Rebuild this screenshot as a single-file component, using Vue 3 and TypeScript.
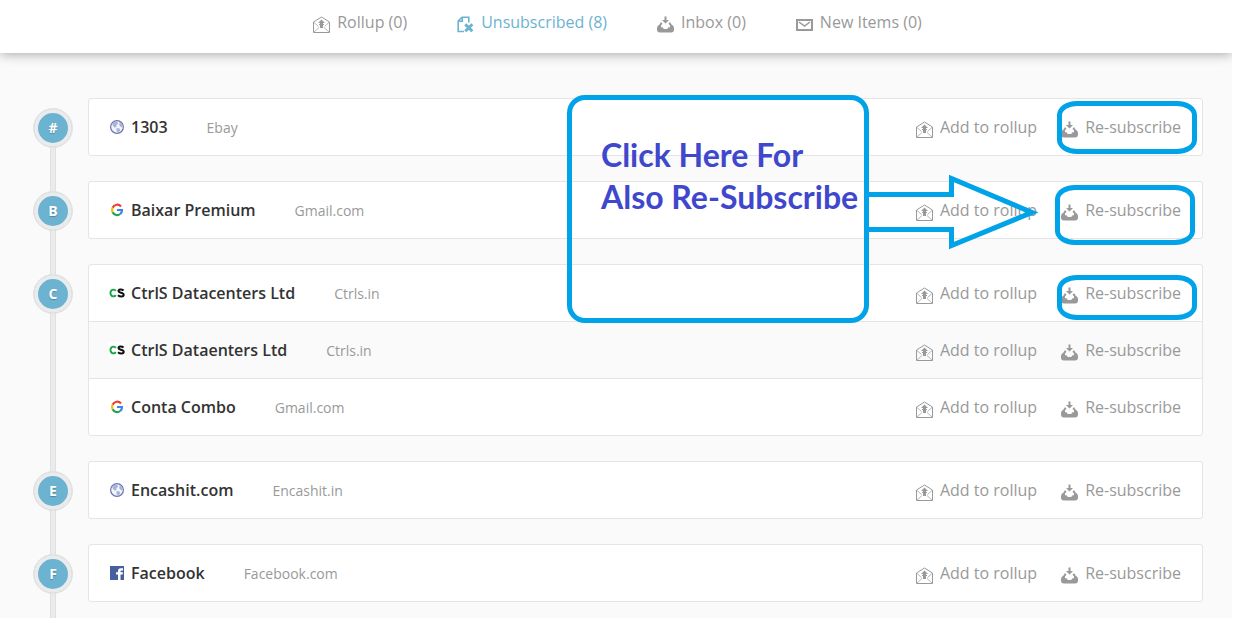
<script setup lang="ts">
interface Sender {
  name: string
  domain: string
  logo: 'globe' | 'google' | 'ctrls' | 'facebook'
}
interface Group {
  letter: string
  senders: Sender[]
}
interface Tab {
  label: string
  icon: 'rollup' | 'unsubscribed' | 'inbox' | 'new'
  active: boolean
}

const tabs: Tab[] = [
  { label: 'Rollup (0)', icon: 'rollup', active: false },
  { label: 'Unsubscribed (8)', icon: 'unsubscribed', active: true },
  { label: 'Inbox (0)', icon: 'inbox', active: false },
  { label: 'New Items (0)', icon: 'new', active: false },
]

const groups: Group[] = [
  { letter: '#', senders: [{ name: '1303', domain: 'Ebay', logo: 'globe' }] },
  { letter: 'B', senders: [{ name: 'Baixar Premium', domain: 'Gmail.com', logo: 'google' }] },
  {
    letter: 'C',
    senders: [
      { name: 'CtrlS Datacenters Ltd', domain: 'Ctrls.in', logo: 'ctrls' },
      { name: 'CtrlS Dataenters Ltd', domain: 'Ctrls.in', logo: 'ctrls' },
      { name: 'Conta Combo', domain: 'Gmail.com', logo: 'google' },
    ],
  },
  { letter: 'E', senders: [{ name: 'Encashit.com', domain: 'Encashit.in', logo: 'globe' }] },
  { letter: 'F', senders: [{ name: 'Facebook', domain: 'Facebook.com', logo: 'facebook' }] },
]
</script>

<template>
  <svg class="defs" aria-hidden="true">
    <symbol id="i-rollup" viewBox="0 0 17 17">
      <path d="M.5 6 8.500 1l8 5v10.500H.5z" fill="none" stroke="currentColor" stroke-width="1" />
      <path d="M1 6.500 5.500 10.500 M16 6.500 11.500 10.500 M1 16l5-4.500 M16 16l-5-4.500" fill="none" stroke="currentColor" stroke-width=".7" />
      <path d="M8.500 3.500 12 7H10v1h1v1h-1v3H7V9H6V8h1V7H5z" fill="currentColor" />
    </symbol>
    <symbol id="i-unsubscribed" viewBox="0 0 17 17">
      <path d="M7 15.500H1.200V5L5 1.200h6.800v5.300 M5.300 1.200v4.100H1.200" fill="none" stroke="currentColor" stroke-width="1.600" />
      <path d="m8.300 8.300 7 7 M15.300 8.300l-7 7" fill="none" stroke="currentColor" stroke-width="3" />
    </symbol>
    <symbol id="i-inbox" viewBox="0 0 17 17">
      <path d="M7.500.5h2V4H12L8.500 7.500 5 4h2.500z" fill="currentColor" />
      <path d="M4 6 5.500 7.800 4 9.500v1.700h1.500L6.800 13h3.400l1.300-1.800H13V9.500l-1.500-1.700L13 6l1.500 2.500Q17 9.500 17 12v1.500Q17 16.500 14 16.500H3Q0 16.500 0 13.500V12q0-2.500 2.500-3.500z" fill="currentColor" />
    </symbol>
    <symbol id="i-new" viewBox="0 0 17 17">
      <path d="M1 4h15v10H1z" fill="none" stroke="currentColor" stroke-width="2" />
      <path d="m3 6 5.500 4L14 6" fill="none" stroke="currentColor" stroke-width="1.500" />
    </symbol>
    <symbol id="l-globe" viewBox="0 0 16 16">
      <circle cx="8" cy="8" r="6.400" fill="#f2f4fb" stroke="#6a74ae" stroke-width="1.200" />
      <path d="M3 4.500 5.500 2.500 8.500 3 9 5 7.200 6.200 7.500 8 5.500 8.500 4 7z M7.500 9l3 .5.8 1.500-1.800 2.500-1.800-1z M10.500 3l2.500 2 .8 3-1.800.3-1.700-2z" fill="#a9b3d8" />
    </symbol>
    <symbol id="l-google" viewBox="0 0 16 16">
      <g fill="none" stroke-width="2.200">
        <path d="M12 4.500A5 5 0 0 0 3.600 5.700" stroke="#e8402f" />
        <path d="M3.600 5.700a5 5 0 0 0 0 4.600" stroke="#fbbc05" />
        <path d="M3.600 10.300a5 5 0 0 0 7.600 1.700" stroke="#23a455" />
        <path d="M11.200 12A5 5 0 0 0 13 8H8" stroke="#3d82f0" />
      </g>
    </symbol>
    <symbol id="l-ctrls" viewBox="0 0 16 16">
      <path d="M0 0h16v16H0z" fill="#fff" />
      <path d="M6.800 5.900a3 3.400 0 1 0 0 4.200" fill="none" stroke="#12a840" stroke-width="1.900" />
      <path d="M14.600 5.600C12.500 3.800 9.300 4.300 9.500 6.200c.2 2 5.200 1.200 5.200 3.600 0 2.200-3.700 2.300-5.700.5" fill="none" stroke="#111" stroke-width="2" />
    </symbol>
    <symbol id="l-facebook" viewBox="0 0 16 16">
      <path d="M1 1h14v14H1z" fill="#4460a0" />
      <path d="M9 15V9.500H7V7.300h2V6q0-2.800 2.700-2.800H14v2.200h-1.500q-1 0-1 1v.9H14l-.4 2.200h-2.100V15z" fill="#fff" />
    </symbol>
  </svg>

  <div class="page">
    <nav class="tabs">
      <a v-for="tab in tabs" :key="tab.icon" href="#" class="link" :class="{ active: tab.active }">
        <svg class="icon"><use :href="`#i-${tab.icon}`" /></svg>
        <span>{{ tab.label }}</span>
      </a>
    </nav>

    <main class="timeline">
      <section v-for="group in groups" :key="group.letter" class="group">
        <div class="rail"><span class="badge">{{ group.letter }}</span></div>
        <ul class="card">
          <li v-for="sender in group.senders" :key="sender.name" class="row">
            <svg class="logo"><use :href="`#l-${sender.logo}`" /></svg>
            <span class="name">{{ sender.name }}</span>
            <span class="domain">{{ sender.domain }}</span>
            <div class="actions">
              <button type="button" class="link">
                <svg class="icon"><use href="#i-rollup" /></svg>
                <span>Add to rollup</span>
              </button>
              <button type="button" class="link">
                <svg class="icon"><use href="#i-inbox" /></svg>
                <span>Re-subscribe</span>
              </button>
            </div>
          </li>
        </ul>
      </section>
    </main>

    <div class="notes">
      <p class="callout">Click Here For<br />Also Re-Subscribe</p>
      <svg class="arrow" viewBox="0 0 172 76">
        <path d="M0 20.500H83.500V4.500L164 38.500 83.500 71.500V55.500H0" fill="none" stroke="#00a2e8" stroke-width="5" />
      </svg>
      <div class="ring first"></div>
      <div class="ring second"></div>
      <div class="ring third"></div>
    </div>
  </div>
</template>

<style>
body {
  margin: 0;
  background: #fff;
}
</style>

<style scoped>
.defs {
  position: absolute;
  width: 0;
  height: 0;
}
.page {
  position: relative;
  overflow: hidden;
  margin-right: 5px;
  background: #fafafa;
  font-family: "Open Sans", sans-serif;
  font-size: 16px;
  line-height: 22px;
  color: #999;
}
.tabs {
  position: relative;
  display: flex;
  justify-content: center;
  align-items: flex-start;
  gap: 50px;
  height: 42px;
  padding: 11px 0 0 3px;
  background: #fff;
  box-shadow: 0 0 12px rgba(0, 0, 0, 0.4);
}
.link {
  display: flex;
  align-items: center;
  gap: 7px;
  padding: 0;
  border: 0;
  background: none;
  font: inherit;
  color: #999;
  text-decoration: none;
  white-space: nowrap;
  cursor: pointer;
}
.link.active {
  color: #6cb3d1;
}
.icon {
  width: 17px;
  height: 17px;
  margin-top: 5px;
}
.timeline {
  padding: 45px 29px 0 33px;
}
.group {
  display: flex;
  gap: 15px;
}
.rail {
  position: relative;
  flex: none;
  width: 40px;
  padding-top: 10px;
}
.rail::before {
  content: "";
  position: absolute;
  top: 0;
  bottom: 0;
  left: 17px;
  width: 4px;
  border: solid #e0e0e0;
  border-width: 0 1px;
  background: #ebebeb;
}
.group:first-child .rail::before {
  top: 20px;
}
.badge {
  position: relative;
  display: block;
  box-sizing: border-box;
  width: 40px;
  height: 40px;
  border: 1px solid #e2e2e2;
  border-radius: 50%;
  background: #6cb3d1;
  background-clip: padding-box;
  box-shadow: inset 0 0 0 4px #ebebeb;
  font-size: 14px;
  font-weight: 700;
  line-height: 38px;
  text-align: center;
  color: #fff;
  text-shadow: 0 1px 1px rgba(0, 0, 0, 0.25);
}
.card {
  flex: 1;
  margin: 0 0 25px;
  padding: 0;
  border: 1px solid #e5e5e5;
  border-radius: 3px;
  background: #fff;
  list-style: none;
}
.group:last-child .card {
  margin-bottom: 16px;
}
.row {
  display: flex;
  align-items: center;
  height: 56px;
  padding: 0 21px 0 20px;
}
.row + .row {
  border-top: 1px solid #e5e5e5;
}
.row:nth-child(even) {
  background: #fafafa;
}
.logo {
  width: 16px;
  height: 16px;
  margin-right: 6px;
}
.name {
  font-weight: 600;
  color: #333;
}
.domain {
  margin: 2px 0 0 39px;
  font-size: 14px;
}
.actions {
  display: flex;
  gap: 24px;
  margin-left: auto;
}
.notes {
  position: absolute;
  inset: 0;
  pointer-events: none;
}
.callout {
  position: absolute;
  top: 95px;
  right: 363px;
  box-sizing: border-box;
  width: 302px;
  height: 228px;
  margin: 0;
  padding: 34px 0 0 29px;
  border: 5px solid #00a2e8;
  border-radius: 18px;
  font: 700 32px/42px Lato, sans-serif;
  color: #3f48cc;
  white-space: nowrap;
}
.arrow {
  position: absolute;
  top: 174px;
  right: 192px;
  width: 172px;
  height: 76px;
}
.ring {
  position: absolute;
  box-sizing: border-box;
  width: 140px;
  border: 5px solid #00a2e8;
  border-radius: 20px / 14px;
}
.first {
  top: 101px;
  right: 35px;
  height: 53px;
}
.second {
  top: 185px;
  right: 37px;
  height: 60px;
}
.third {
  top: 275px;
  right: 35px;
  height: 45px;
}
</style>
